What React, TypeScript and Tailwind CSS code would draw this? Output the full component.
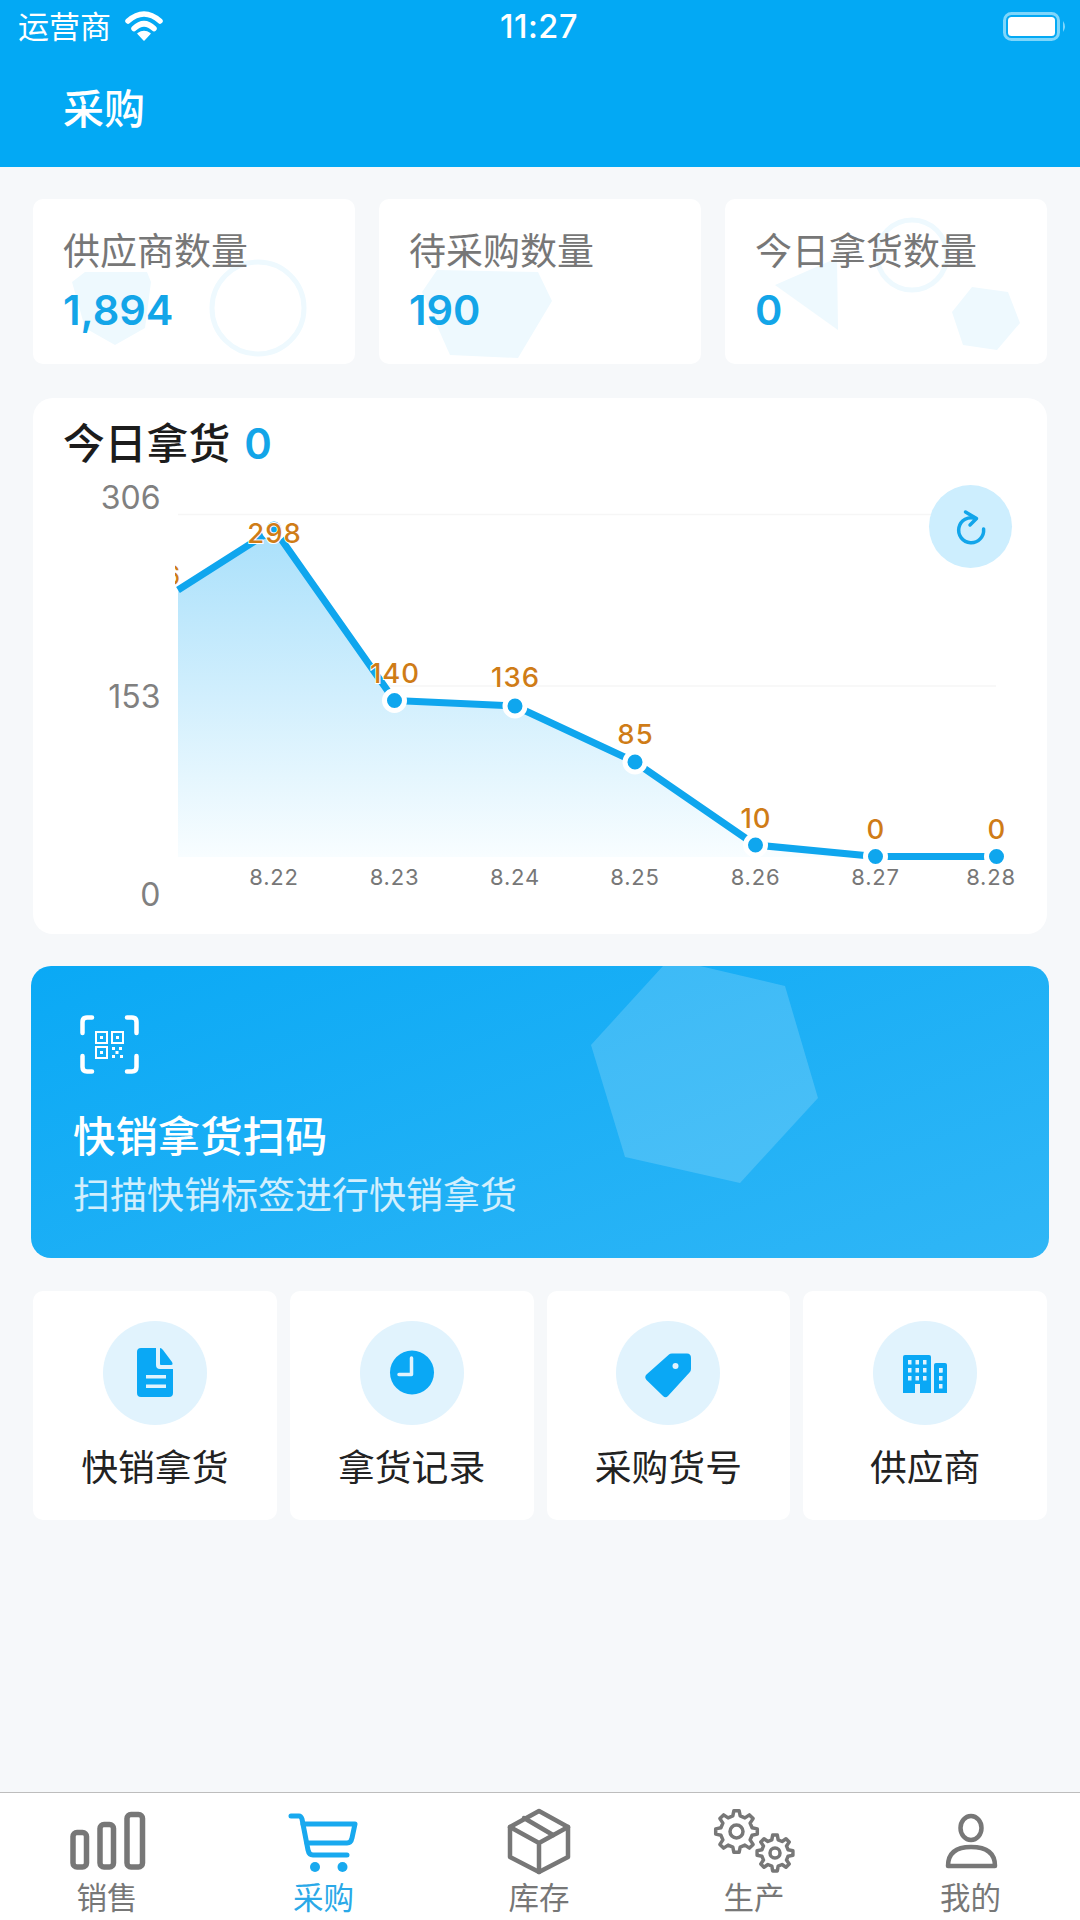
import React from "react";

const BLUE = "#0fa6ee";

function gearPath(cx: number, cy: number, R: number, r: number, n: number) {
  const pts: string[] = [];
  const step = (Math.PI * 2) / n;
  for (let i = 0; i < n; i++) {
    const a = i * step - Math.PI / 2;
    const list: [number, number][] = [
      [r, a - step * 0.3],
      [R, a - step * 0.16],
      [R, a + step * 0.16],
      [r, a + step * 0.3],
    ];
    list.forEach(([rad, ang]) => {
      pts.push(`${(cx + rad * Math.cos(ang)).toFixed(1)} ${(cy + rad * Math.sin(ang)).toFixed(1)}`);
    });
  }
  return "M" + pts.join("L") + "Z";
}

function Decor({ children }: { children: React.ReactNode }) {
  return (
    <svg className="absolute inset-0 w-full h-full" viewBox="0 0 322 165" fill="#eef9fe">
      {children}
    </svg>
  );
}

function StatCard({ label, value, decor }: { label: string; value: string; decor: React.ReactNode }) {
  return (
    <div className="relative h-[165px] rounded-[10px] bg-white overflow-hidden pl-[30px] pt-[29px]">
      <Decor>{decor}</Decor>
      <div className="relative text-[37px] leading-[48px] text-[#777]">{label}</div>
      <div className="relative mt-[10px] text-[41.5px] leading-[48px] font-semibold text-[#13a5e8]">{value}</div>
    </div>
  );
}

function Chart() {
  const pts: [number, number][] = [
    [178, 590],
    [274, 529],
    [394.5, 700.5],
    [515, 706],
    [635, 762],
    [755.5, 845],
    [875.5, 856.5],
    [996.5, 856.5],
  ];
  const line = pts.map((p) => p.join(" ")).join(" L");
  const labels: [string, number, number][] = [
    ["298", 274, 543],
    ["140", 394.5, 683],
    ["136", 515, 687],
    ["85", 635, 744],
    ["10", 755.5, 828],
    ["0", 875.5, 839],
    ["0", 996.5, 839],
  ];
  const xl: [string, number][] = [
    ["8.22", 274],
    ["8.23", 394.5],
    ["8.24", 515],
    ["8.25", 635],
    ["8.26", 755.5],
    ["8.27", 875.5],
    ["8.28", 991],
  ];
  return (
    <svg className="block w-[1014px] h-[456px]" viewBox="33 478 1014 456">
      <defs>
        <linearGradient id="area" x1="0" y1="0" x2="0" y2="1">
          <stop offset="0" stopColor="#a9e0fb" />
          <stop offset="1" stopColor="#f8fdff" />
        </linearGradient>
        <clipPath id="edge">
          <rect x="175" y="500" width="10" height="120" />
        </clipPath>
      </defs>
      <path d="M178 514.5H996M178 686H996" stroke="#f6f6f6" strokeWidth="1.5" />
      <path d={`M${line} L996.5 857 L178 857Z`} fill="url(#area)" />
      <text x="155" y="585" textAnchor="middle" fontSize="27" letterSpacing="1" fill="#cf7c17" clipPath="url(#edge)">
        256
      </text>
      <path d={`M${line}`} fill="none" stroke={BLUE} strokeWidth="7" strokeLinejoin="round" />
      {pts.slice(1).map(([x, y]) => (
        <circle key={x} cx={x} cy={y} r="10" fill={BLUE} stroke="#fff" strokeWidth="5" />
      ))}
      {labels.map(([t, x, y]) => (
        <text
          key={x}
          x={x + 0.5}
          y={y}
          textAnchor="middle"
          fontSize="27.5"
          fontWeight="500"
          fill="#cf7c17"
          stroke="#fff"
          strokeWidth="2"
          paintOrder="stroke"
          letterSpacing="1"
        >
          {t}
        </text>
      ))}
      {xl.map(([t, x]) => (
        <text key={t} x={x} y="885" textAnchor="middle" fontSize="22" fill="#777" letterSpacing="0.8">
          {t}
        </text>
      ))}
      <text x="160.5" y="508.5" textAnchor="end" fontSize="32" fill="#808080">306</text>
      <text x="160.5" y="707.5" textAnchor="end" fontSize="32" fill="#808080">153</text>
      <text x="160.5" y="905.5" textAnchor="end" fontSize="32" fill="#808080">0</text>
    </svg>
  );
}

function QrIcon() {
  return (
    <svg className="block w-[60px] h-[60px]" viewBox="80 1015 60 60" fill="none" stroke="#fff">
      <g strokeWidth="4.5" strokeLinecap="round">
        <path d="M92 1017.5H87Q82.5 1017.5 82.5 1022V1033" />
        <path d="M127 1017.5H132Q136.5 1017.5 136.5 1022V1033" />
        <path d="M82.5 1056V1067Q82.5 1071.5 87 1071.5H92" />
        <path d="M136.5 1056V1067Q136.5 1071.5 132 1071.5H127" />
      </g>
      <g strokeWidth="2">
        <rect x="96" y="1032" width="11" height="11" />
        <rect x="112" y="1032" width="11" height="11" />
        <rect x="96" y="1047" width="11" height="11" />
      </g>
      <g fill="#fff" stroke="none">
        <rect x="100" y="1036" width="3" height="3" />
        <rect x="116" y="1036" width="3" height="3" />
        <rect x="100" y="1051" width="3" height="3" />
        <rect x="112" y="1047" width="3" height="3" />
        <rect x="119" y="1047" width="3" height="3" />
        <rect x="115.5" y="1051" width="3" height="3" />
        <rect x="112" y="1055" width="3" height="3" />
        <rect x="120" y="1055" width="3" height="3" />
      </g>
    </svg>
  );
}

const F = "#0aa8f5";
const L = "#e1f3fd";

function DocIcon() {
  return (
    <svg className="block w-[60px] h-[60px]" viewBox="125 1343 60 60" fill={F}>
      <path d="M141 1348H156V1365Q156 1369 160 1369H173V1393Q173 1397 169 1397H141Q137 1397 137 1393V1352Q137 1348 141 1348Z" />
      <path d="M160 1348Q161.5 1348 163 1350L172 1362Q173.5 1365 171 1365H161Q160 1365 160 1364Z" />
      <rect x="146" y="1375" width="20" height="3.5" fill={L} />
      <rect x="146" y="1384.5" width="20" height="3.5" fill={L} />
    </svg>
  );
}
function ClockIcon() {
  return (
    <svg className="block w-[60px] h-[60px]" viewBox="382 1343 60 60">
      <circle cx="412" cy="1372.5" r="22" fill={F} />
      <path d="M411.5 1358V1374.5H399" fill="none" stroke={L} strokeWidth="3.5" strokeLinecap="round" strokeLinejoin="round" />
    </svg>
  );
}
function TagIcon() {
  return (
    <svg className="block w-[60px] h-[60px]" viewBox="639 1343 60 60">
      <path d="M670 1354.5Q671 1353.5 673 1353.5H688Q692 1353.5 692 1358V1369Q692 1371 690.5 1372.5L669 1396Q666.5 1398.5 664 1396L647.5 1380Q645 1377 647.5 1374.5Z" fill={F} />
      <circle cx="676.5" cy="1366" r="3" fill={L} />
    </svg>
  );
}
function BuildingIcon() {
  const rows = [1360, 1368, 1376];
  return (
    <svg className="block w-[60px] h-[60px]" viewBox="896 1343 60 60" fill={F}>
      <path d="M906 1355H930Q932 1355 932 1357V1393H904V1357Q904 1355 906 1355Z" />
      <path d="M937 1363H946Q948 1363 948 1365V1393H935V1365Q935 1363 937 1363Z" />
      {rows.map((y) => (
        <g key={y} fill={L}>
          <rect x="909" y={y} width="3.5" height="4.5" />
          <rect x="916.5" y={y} width="3.5" height="4.5" />
          <rect x="924" y={y} width="3.5" height="4.5" />
          <rect x="940" y={y + 8} width="3.5" height="4.5" />
        </g>
      ))}
      <rect x="916" y="1384" width="5" height="9" fill={L} />
      <rect x="940" y="1368" width="3.5" height="4.5" fill={L} />
    </svg>
  );
}

function Tile({ label, icon }: { label: string; icon: React.ReactNode }) {
  return (
    <div className="h-[229px] rounded-[10px] bg-white flex flex-col items-center pt-[30px]">
      <div className="w-[104px] h-[104px] rounded-full bg-[#e1f3fd] flex items-center justify-center">{icon}</div>
      <div className="mt-[18px] text-[36.8px] leading-[50px] text-[#222]">{label}</div>
    </div>
  );
}

function TabIcon({ c, children, color = "#777" }: { c: number; children: React.ReactNode; color?: string }) {
  return (
    <svg
      className="block w-[90px] h-[70px]"
      viewBox={`${c - 45} 1806 90 70`}
      fill="none"
      stroke={color}
      strokeLinecap="round"
      strokeLinejoin="round"
    >
      {children}
    </svg>
  );
}

function Tab({ label, active, pad, children }: { label: string; active?: boolean; pad: string; children: React.ReactNode }) {
  return (
    <div className="w-[216px] flex flex-col items-center">
      {children}
      <div className={"text-[30.5px] leading-[36px] mt-[4px] " + pad + " " + (active ? "text-[#2aa9e8]" : "text-[#777]")}>{label}</div>
    </div>
  );
}

export default function App() {
  return (
    <div className="w-[1080px] h-[1920px] flex flex-col bg-[#f6f8fa] overflow-hidden font-[Inter,'Noto_Sans_CJK_SC',sans-serif]">
      <header className="h-[167px] shrink-0 bg-[#03a9f4] text-white flex flex-col">
        <div className="h-[54px] flex items-center pl-[18px] pr-[12px]">
          <div className="flex-1 flex items-center text-[31px]">
            <span>运营商</span>
            <svg className="ml-[12px] w-[42px] h-[32px]" viewBox="123 11 42 32">
              <path d="M128 21Q144 7 160 21" fill="none" stroke="#fff" strokeWidth="5.5" strokeLinecap="round" />
              <path d="M134 28.5Q144 19 154 28.5" fill="none" stroke="#fff" strokeWidth="5.5" strokeLinecap="round" />
              <path d="M138 33.5Q144 29.5 150 33.5L144 40Z" fill="#fff" stroke="#fff" strokeWidth="1.5" strokeLinejoin="round" />
            </svg>
          </div>
          <div className="text-[32.5px] font-medium tracking-[0.5px] mr-[8px]">11:27</div>
          <div className="flex-1 flex justify-end">
            <svg className="w-[66px] h-[32px]" viewBox="1002 11 66 32">
              <rect x="1004.5" y="13.5" width="54" height="26" rx="7" fill="none" stroke="#7fd6fb" strokeWidth="3" />
              <rect x="1008" y="17" width="47" height="19" rx="3.5" fill="#fff" />
              <path d="M1063 21Q1067 26.5 1063 32Z" fill="#7fd6fb" />
            </svg>
          </div>
        </div>
        <div className="flex-1 flex items-center pl-[63px] pb-[2px] text-[41px] font-medium">采购</div>
      </header>

      <main className="flex-1 px-8 pt-8">
        <div className="mx-px grid grid-cols-3 gap-6">
          <StatCard
            label="供应商数量"
            value="1,894"
            decor={
              <>
                <path d="M39 83L52 73H114L118 83L112 129L82 146L52 129Z" />
                <circle cx="225" cy="109" r="46" fill="none" stroke="#eef9fe" strokeWidth="5" />
              </>
            }
          />
          <StatCard label="待采购数量" value="190" decor={<path d="M58 71L159 73L173 102L139 159L71 156L43 93Z" />} />
          <StatCard
            label="今日拿货数量"
            value="0"
            decor={
              <>
                <path d="M112 59L113 131L50 86Z" />
                <circle cx="187" cy="56" r="35" fill="none" stroke="#eef9fe" strokeWidth="5" />
                <path d="M247 88L283 93L295 124L272 151L238 146L227 113Z" />
              </>
            }
          />
        </div>

        <section className="relative mx-px mt-[34px] h-[536px] rounded-[20px] bg-white overflow-hidden">
          <div className="h-[80px] pt-[12px] pl-[30px] flex items-center text-[41.8px] font-medium text-[#1c1c1c]">
            今日拿货<span className="ml-[14px] font-semibold text-[#13a5e8]">0</span>
          </div>
          <Chart />
          <div className="absolute left-[896px] top-[87px] w-[83px] h-[83px] rounded-full bg-[#cdeefe] flex items-center justify-center">
            <svg className="w-[40px] h-[40px]" viewBox="950 508 40 40" fill="none" stroke="#12a5ea" strokeWidth="3.5" strokeLinecap="round" strokeLinejoin="round">
              <path d="M974.5 519.5A12.5 12.5 0 1 0 982.6 530" />
              <path d="M964.5 513L975.5 519.5L969 526" />
            </svg>
          </div>
        </section>

        <section className="relative -mx-px mt-8 h-[292px] rounded-[20px] overflow-hidden bg-[linear-gradient(160deg,#0aa9f5,#30b6f6)] pl-[42px] pt-[49px] text-white">
          <svg className="absolute inset-0 w-full h-full" viewBox="32 966 1016 292">
            <path d="M663 966H700L785 986L818 1098L740 1183L625 1157L591 1045Z" fill="#fff" fillOpacity="0.17" />
          </svg>
          <div className="relative">
            <div className="ml-[7px]">
              <QrIcon />
            </div>
            <div className="mt-[37px] text-[42.4px] leading-[50px] font-medium">快销拿货扫码</div>
            <div className="mt-[11px] text-[37px] leading-[46px] text-white/80">扫描快销标签进行快销拿货</div>
          </div>
        </section>

        <div className="mx-px mt-[33px] grid grid-cols-4 gap-[13px]">
          <Tile label="快销拿货" icon={<DocIcon />} />
          <Tile label="拿货记录" icon={<ClockIcon />} />
          <Tile label="采购货号" icon={<TagIcon />} />
          <Tile label="供应商" icon={<BuildingIcon />} />
        </div>
      </main>

      <nav className="h-[128px] shrink-0 bg-white border-t-[1.5px] border-[#bdbdbd] flex pt-[13px]">
        <Tab label="销售" pad="pr-[2px]">
          <TabIcon c={108}>
            <g strokeWidth="5.5">
              <rect x="73" y="1832.5" width="13.5" height="34.5" rx="4" />
              <rect x="100" y="1824.5" width="13.5" height="42.5" rx="4" />
              <rect x="127" y="1814.5" width="15.5" height="52.5" rx="4" />
            </g>
          </TabIcon>
        </Tab>
        <Tab label="采购" active pad="pr-[1px]">
          <TabIcon c={324} color="#18a9ef">
            <path d="M291 1816H299Q301 1816 302 1819L308 1850Q309 1855 313 1855H347" strokeWidth="5" />
            <path d="M303 1824H355L352 1838Q351 1843 347 1843H307" strokeWidth="5" />
            <circle cx="315" cy="1867" r="5" fill="#18a9ef" stroke="none" />
            <circle cx="342.5" cy="1867" r="5" fill="#18a9ef" stroke="none" />
          </TabIcon>
        </Tab>
        <Tab label="库存" pad="pr-[2px]">
          <TabIcon c={540}>
            <g strokeWidth="4.5">
              <path d="M539 1811L568 1827V1857L539 1872L510 1857V1827Z" />
              <path d="M510 1827L539 1843L568 1827M539 1843V1872" />
              <path d="M524 1818L553 1835" />
            </g>
          </TabIcon>
        </Tab>
        <Tab label="生产" pad="pr-[4px]">
          <TabIcon c={756}>
            <g strokeWidth="3.5">
              <path d={gearPath(736.5, 1831.5, 21, 16, 8)} />
              <circle cx="736.5" cy="1831.5" r="6.5" />
              <path d={gearPath(775, 1853, 18, 13.5, 8)} />
              <circle cx="775" cy="1853" r="5" />
            </g>
          </TabIcon>
        </Tab>
        <Tab label="我的" pad="pr-[3px]">
          <TabIcon c={972}>
            <g strokeWidth="4.5">
              <ellipse cx="971" cy="1828" rx="10.5" ry="12" />
              <path d="M948 1866Q948 1847 971 1847Q995 1847 995 1866Z" />
            </g>
          </TabIcon>
        </Tab>
      </nav>
    </div>
  );
}
